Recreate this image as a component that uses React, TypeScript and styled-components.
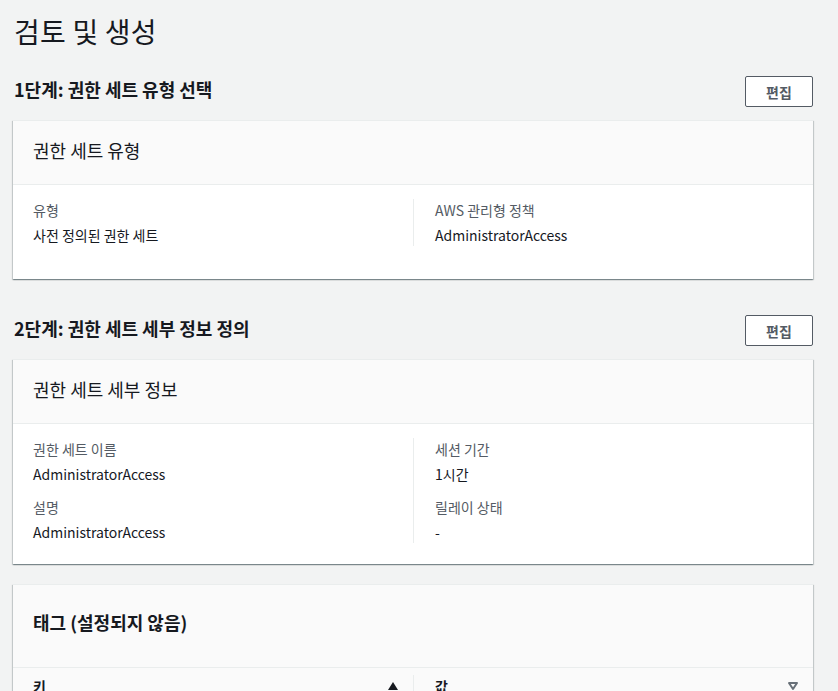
import React from 'react';
import styled, { createGlobalStyle } from 'styled-components';

const GlobalStyle = createGlobalStyle`
  html, body {
    margin: 0;
    padding: 0;
    background: #f2f3f3;
    font-family: "Noto Sans CJK KR", "Noto Sans", sans-serif;
    color: #16191f;
  }
`;

type Pair = { label: string; value: string };

const Page = styled.div`
  padding: 7px 25px 0 13px;
  width: 800px;
`;

const Title = styled.h1`
  margin: 0 0 0 1px;
  font-size: 28px;
  line-height: 48px;
  font-weight: 400;
  letter-spacing: 0.2px;
`;

const Section = styled.section<{ $top: number }>`
  margin-top: ${p => p.$top}px;
`;

const SectionHeader = styled.div`
  display: flex;
  align-items: center;
  justify-content: space-between;
  margin-bottom: 13px;
`;

const SectionTitle = styled.h2`
  margin: 0 0 5px 1px;
  font-size: 18px;
  font-weight: 700;
  line-height: 26px;
`;

const EditButton = styled.button`
  width: 68px;
  height: 31px;
  padding: 0;
  background: #fff;
  border: 1px solid #545b64;
  border-radius: 2px;
  font-family: inherit;
  font-size: 14px;
  font-weight: 700;
  color: #545b64;
  cursor: pointer;
`;

const Card = styled.div`
  background: #fff;
  border-top: 1px solid #eaeded;
  box-shadow: 0 1px 1px 0 rgba(0, 28, 36, 0.3),
    1px 1px 1px 0 rgba(0, 28, 36, 0.15), -1px 1px 1px 0 rgba(0, 28, 36, 0.15);
`;

const CardHeader = styled.div<{ $h: number; $bold?: boolean; $lift: number }>`
  height: ${p => p.$h}px;
  box-sizing: border-box;
  display: flex;
  align-items: center;
  padding: 0 20px ${p => p.$lift}px;
  background: #fafafa;
  border-bottom: 1px solid #eaeded;
  font-size: 18px;
  font-weight: ${p => (p.$bold ? 700 : 400)};
`;

const CardBody = styled.div<{ $bottom: number }>`
  display: grid;
  grid-template-columns: 1fr 1fr;
  padding: 14px 20px ${p => p.$bottom}px;
`;

const Column = styled.div<{ $divider?: boolean }>`
  display: flex;
  flex-direction: column;
  gap: 11px;
  padding-left: ${p => (p.$divider ? '21px' : '0')};
  border-left: ${p => (p.$divider ? '1px solid #eaeded' : 'none')};
`;

const KeyValue = styled.div`
  display: flex;
  flex-direction: column;
  gap: 3px;
`;

const Label = styled.div`
  font-size: 14px;
  line-height: 22px;
  color: #545b64;
`;

const Value = styled.div`
  font-size: 14px;
  line-height: 22px;
  color: #16191f;
`;

const TableHead = styled.div`
  display: grid;
  grid-template-columns: 1fr 1fr;
  background: #fafafa;
  padding-top: 7px;
  height: 40px;
`;

const HeadCell = styled.div<{ $divider?: boolean }>`
  display: flex;
  align-items: center;
  justify-content: space-between;
  height: 22px;
  padding: 0 14px 0 ${p => (p.$divider ? '21px' : '20px')};
  border-left: ${p => (p.$divider ? '1px solid #eaeded' : 'none')};
  font-size: 14px;
  line-height: 22px;
  font-weight: 700;
  color: #16191f;
`;

const SortIcon = ({ filled }: { filled?: boolean }) => (
  <svg width="12" height="10" viewBox="0 0 12 10">
    {filled ? (
      <path d="M6 1 L11 9 L1 9 Z" fill="#16191f" />
    ) : (
      <path
        d="M2 2 L10 2 L6 8 Z"
        fill="none"
        stroke="#687078"
        strokeWidth="2"
        strokeLinejoin="round"
      />
    )}
  </svg>
);

const DetailCard = ({
  heading,
  left,
  right,
  bottom,
}: {
  heading: string;
  left: Pair[];
  right: Pair[];
  bottom: number;
}) => (
  <Card>
    <CardHeader $h={64} $lift={6}>
      {heading}
    </CardHeader>
    <CardBody $bottom={bottom}>
      <Column>
        {left.map(p => (
          <KeyValue key={p.label}>
            <Label>{p.label}</Label>
            <Value>{p.value}</Value>
          </KeyValue>
        ))}
      </Column>
      <Column $divider>
        {right.map(p => (
          <KeyValue key={p.label}>
            <Label>{p.label}</Label>
            <Value>{p.value}</Value>
          </KeyValue>
        ))}
      </Column>
    </CardBody>
  </Card>
);

export default function App() {
  return (
    <>
      <GlobalStyle />
      <Page>
        <Title>검토 및 생성</Title>
        <Section $top={21}>
          <SectionHeader>
            <SectionTitle>1단계: 권한 세트 유형 선택</SectionTitle>
            <EditButton>편집</EditButton>
          </SectionHeader>
          <DetailCard
            heading="권한 세트 유형"
            left={[{ label: '유형', value: '사전 정의된 권한 세트' }]}
            right={[{ label: 'AWS 관리형 정책', value: 'AdministratorAccess' }]}
            bottom={33}
          />
        </Section>
        <Section $top={36}>
          <SectionHeader>
            <SectionTitle>2단계: 권한 세트 세부 정보 정의</SectionTitle>
            <EditButton>편집</EditButton>
          </SectionHeader>
          <DetailCard
            heading="권한 세트 세부 정보"
            left={[
              { label: '권한 세트 이름', value: 'AdministratorAccess' },
              { label: '설명', value: 'AdministratorAccess' },
            ]}
            right={[
              { label: '세션 기간', value: '1시간' },
              { label: '릴레이 상태', value: '-' },
            ]}
            bottom={21}
          />
        </Section>
        <Section $top={20}>
          <Card>
            <CardHeader $h={83} $bold $lift={8}>
              태그 (설정되지 않음)
            </CardHeader>
            <TableHead>
              <HeadCell>
                <span>키</span>
                <SortIcon filled />
              </HeadCell>
              <HeadCell $divider>
                <span>값</span>
                <SortIcon />
              </HeadCell>
            </TableHead>
          </Card>
        </Section>
      </Page>
    </>
  );
}
